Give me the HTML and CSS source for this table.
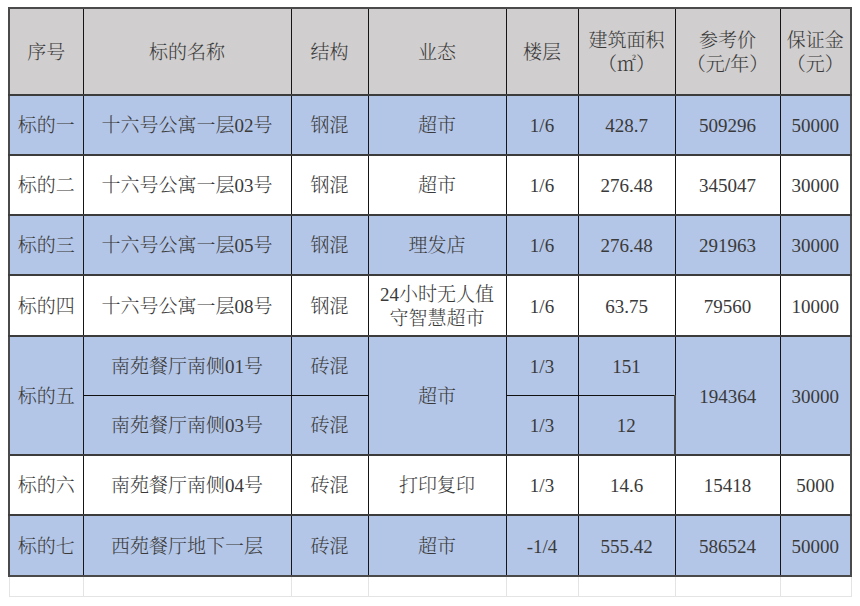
FILE: index.html
```html
<!DOCTYPE html>
<html lang="zh-CN">
<head>
<meta charset="utf-8">
<title>标的清单</title>
<link rel="stylesheet" href="styles.css">
</head>
<body>
<table class="sheet">
  <colgroup>
    <col class="c-no">
    <col class="c-name">
    <col class="c-struct">
    <col class="c-use">
    <col class="c-floor">
    <col class="c-area">
    <col class="c-price">
    <col class="c-dep">
  </colgroup>
  <thead>
    <tr class="head">
      <th>序号</th>
      <th>标的名称</th>
      <th>结构</th>
      <th>业态</th>
      <th>楼层</th>
      <th>建筑面积<br>（㎡）</th>
      <th>参考价<br>（元/年）</th>
      <th>保证金<br>（元）</th>
    </tr>
  </thead>
  <tbody>
    <tr class="blue">
      <td>标的一</td><td>十六号公寓一层02号</td><td>钢混</td><td>超市</td><td>1/6</td><td>428.7</td><td>509296</td><td>50000</td>
    </tr>
    <tr class="white">
      <td>标的二</td><td>十六号公寓一层03号</td><td>钢混</td><td>超市</td><td>1/6</td><td>276.48</td><td>345047</td><td>30000</td>
    </tr>
    <tr class="blue">
      <td>标的三</td><td>十六号公寓一层05号</td><td>钢混</td><td>理发店</td><td>1/6</td><td>276.48</td><td>291963</td><td>30000</td>
    </tr>
    <tr class="white tall">
      <td>标的四</td><td>十六号公寓一层08号</td><td>钢混</td><td>24小时无人值<br>守智慧超市</td><td>1/6</td><td>63.75</td><td>79560</td><td>10000</td>
    </tr>
    <tr class="blue split-top">
      <td rowspan="2">标的五</td><td>南苑餐厅南侧01号</td><td>砖混</td><td rowspan="2">超市</td><td>1/3</td><td>151</td><td rowspan="2">194364</td><td rowspan="2">30000</td>
    </tr>
    <tr class="blue split-bottom">
      <td>南苑餐厅南侧03号</td><td>砖混</td><td>1/3</td><td>12</td>
    </tr>
    <tr class="white">
      <td>标的六</td><td>南苑餐厅南侧04号</td><td>砖混</td><td>打印复印</td><td>1/3</td><td>14.6</td><td>15418</td><td>5000</td>
    </tr>
    <tr class="blue last tall">
      <td>标的七</td><td>西苑餐厅地下一层</td><td>砖混</td><td>超市</td><td>-1/4</td><td>555.42</td><td>586524</td><td>50000</td>
    </tr>
    <tr class="empty">
      <td></td><td></td><td></td><td></td><td></td><td></td><td></td><td></td>
    </tr>
  </tbody>
</table>
</body>
</html>
```

FILE: styles.css
```css
html, body {
  background: #ffffff;
}
body {
  margin: 7px 8px;
  font-family: "Liberation Serif", "Noto Serif CJK SC", "Noto Sans CJK SC", serif;
}
.sheet {
  border-collapse: collapse;
  table-layout: fixed;
  width: 842px;
}
.c-no { width: 74px; }
.c-name { width: 208px; }
.c-struct { width: 77px; }
.c-use { width: 138px; }
.c-floor { width: 72px; }
.c-area { width: 97px; }
.c-price { width: 105px; }
.c-dep { width: 71px; }

.sheet th,
.sheet td {
  padding: 2px 0 0 0;
  text-align: center;
  vertical-align: middle;
  font-size: 19px;
  font-weight: 300;
  line-height: 24px;
  color: #3a3a3a;
  border-left: 1px solid #151515;
  border-right: 1px solid #151515;
  border-top: 2px solid #3c3c3c;
  border-bottom: 2px solid #3c3c3c;
  white-space: nowrap;
}
.sheet th:first-child,
.sheet td:first-child {
  border-left: 2px solid #4a4a4a;
}
.sheet th:last-child,
.sheet td:last-child {
  border-right: 2px solid #4a4a4a;
}
.head th {
  height: 83px;
  background: #d0cece;
  border-top: 2px solid #4a4a4a;
}
.blue td {
  background: #b4c6e7;
  height: 56px;
}
.white td {
  background: #ffffff;
  height: 56px;
}
.tall td {
  height: 57px;
}
.split-top td {
  border-bottom-width: 1px;
  border-bottom-color: #111111;
}
.split-bottom td {
  border-top-width: 1px;
  border-top-color: #111111;
}
.split-bottom td:first-child {
  border-left: 1px solid #151515;
}
.last td {
  border-bottom: 2px solid #4a4a4a;
}
.empty td {
  height: 19px;
  padding: 0;
  background: #ffffff;
  border-left: 1px solid #e4e4e4;
  border-right: 1px solid #e4e4e4;
  border-bottom: 1px solid #e4e4e4;
}
.empty td:first-child {
  border-left: 1px solid #e4e4e4;
}
.empty td:last-child {
  border-right: 1px solid #e4e4e4;
}
```
